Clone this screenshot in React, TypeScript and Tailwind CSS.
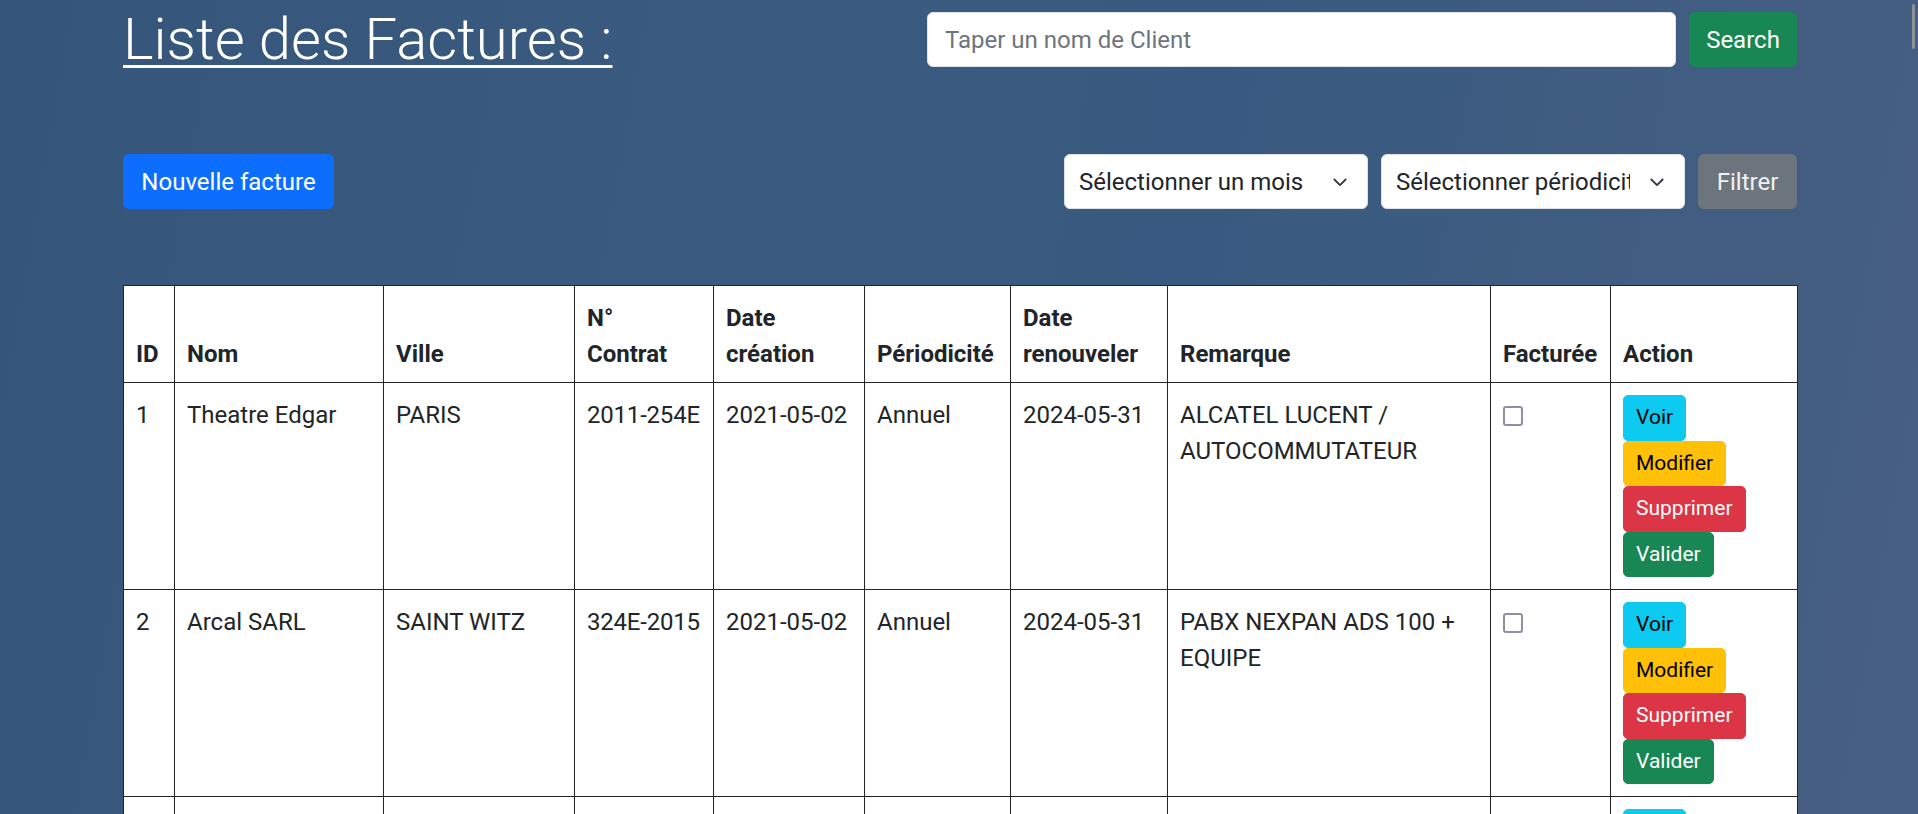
import React from "react";

type Facture = {
  id: number;
  nom: string;
  ville: string;
  contrat: string;
  creation: string;
  periodicite: string;
  renouveler: string;
  remarque: string;
};

const factures: Facture[] = [
  {
    id: 1,
    nom: "Theatre Edgar",
    ville: "PARIS",
    contrat: "2011-254E",
    creation: "2021-05-02",
    periodicite: "Annuel",
    renouveler: "2024-05-31",
    remarque: "ALCATEL LUCENT / AUTOCOMMUTATEUR",
  },
  {
    id: 2,
    nom: "Arcal SARL",
    ville: "SAINT WITZ",
    contrat: "324E-2015",
    creation: "2021-05-02",
    periodicite: "Annuel",
    renouveler: "2024-05-31",
    remarque: "PABX NEXPAN ADS 100 + EQUIPE",
  },
  {
    id: 3,
    nom: "Cabinet Morel",
    ville: "LYON",
    contrat: "118-2019",
    creation: "2021-06-14",
    periodicite: "Mensuel",
    renouveler: "2024-06-30",
    remarque: "STANDARD IP",
  },
];

const Chevron = () => (
  <svg
    viewBox="0 0 16 16"
    className="absolute right-[17px] top-1/2 -translate-y-1/2 w-[20px] h-[20px]"
    fill="none"
    stroke="#343a40"
    strokeWidth="1.5"
    strokeLinecap="round"
    strokeLinejoin="round"
  >
    <path d="m3.5 6 4.5 4.5 4.5-4.5" />
  </svg>
);

const Select = ({ label, width }: { label: string; width: string }) => (
  <div
    className={`relative flex items-center h-[55px] ${width} bg-white border border-[#dee2e6] rounded-[6px] pl-[14px] pr-[54px]`}
  >
    <span className="overflow-hidden whitespace-nowrap text-[24px] text-[#212529]">{label}</span>
    <Chevron />
  </div>
);

const th = "border border-[#212529] px-[12px] pt-[14px] pb-[10px] align-bottom text-left font-bold";
const td = "border border-[#212529] px-[12px] pt-[14px] pb-[10px] align-top";
const tdNoWrap = `${td} whitespace-nowrap`;
const tdAction = "border border-[#212529] px-[12px] py-[12px] align-top";

const App = () => {
  return (
    <div className="relative h-[814px] overflow-hidden bg-[linear-gradient(100deg,#35557a_0%,#3b5a7f_35%,#395a80_60%,#475f82_100%)] font-['Roboto','Liberation_Sans',sans-serif] text-[#212529]">
      {/* scrollbar */}
      <div className="absolute top-[4px] right-[3px] w-[3px] h-[45px] rounded-full bg-[#8c9097]" />

      <div className="pl-[123px] pr-[121px]">
        {/* header */}
        <div className="flex justify-between items-start">
          <h1 className="mt-[3px] text-[58px] leading-[72px] font-light text-white underline decoration-[3px] underline-offset-[6px]">
            Liste des Factures :
          </h1>
          <div className="flex gap-[13px] mt-[12px]">
            <input
              type="text"
              placeholder="Taper un nom de Client"
              className="w-[749px] h-[55px] bg-white border border-[#dee2e6] rounded-[6px] pl-[17px] text-[24px] placeholder:text-[#6c757d] outline-none"
            />
            <button className="w-[108px] h-[55px] rounded-[6px] bg-[#198754] text-white text-[24px]">
              Search
            </button>
          </div>
        </div>

        {/* actions */}
        <div className="flex justify-between items-center mt-[79px]">
          <button className="w-[211px] h-[55px] rounded-[6px] bg-[#0d6efd] text-white text-[24px]">
            Nouvelle facture
          </button>
          <div className="flex gap-[13px]">
            <Select label="Sélectionner un mois" width="w-[304px]" />
            <Select label="Sélectionner périodicité" width="w-[304px]" />
            <button className="w-[99px] h-[55px] rounded-[6px] bg-[#6c757d] text-[#f1f1f1] text-[24px]">
              Filtrer
            </button>
          </div>
        </div>

        {/* table */}
        <table className="mt-[76px] w-[1674px] table-fixed border-collapse bg-white text-[24px] leading-[36px]">
          <colgroup>
            <col className="w-[51px]" />
            <col className="w-[209px]" />
            <col className="w-[191px]" />
            <col className="w-[139px]" />
            <col className="w-[151px]" />
            <col className="w-[146px]" />
            <col className="w-[157px]" />
            <col className="w-[323px]" />
            <col className="w-[120px]" />
            <col className="w-[187px]" />
          </colgroup>
          <thead>
            <tr>
              <th className={th}>ID</th>
              <th className={th}>Nom</th>
              <th className={th}>Ville</th>
              <th className={th}>
                N°
                <br />
                Contrat
              </th>
              <th className={th}>
                Date
                <br />
                création
              </th>
              <th className={th}>Périodicité</th>
              <th className={th}>
                Date
                <br />
                renouveler
              </th>
              <th className={th}>Remarque</th>
              <th className={th}>Facturée</th>
              <th className={th}>Action</th>
            </tr>
          </thead>
          <tbody>
            {factures.map((f) => (
              <tr key={f.id}>
                <td className={td}>{f.id}</td>
                <td className={tdNoWrap}>{f.nom}</td>
                <td className={tdNoWrap}>{f.ville}</td>
                <td className={`${tdNoWrap} tracking-[-0.2px]`}>{f.contrat}</td>
                <td className={tdNoWrap}>{f.creation}</td>
                <td className={tdNoWrap}>{f.periodicite}</td>
                <td className={tdNoWrap}>{f.renouveler}</td>
                <td className={td}>{f.remarque}</td>
                <td className={tdAction}>
                  <span className="block w-[20px] h-[20px] mt-[11px] border-2 border-[#8f8f9d] rounded-[3px] bg-white" />
                </td>
                <td className={tdAction}>
                  <div className="flex flex-col items-start text-[21px] leading-[31.5px]">
                    <button className="px-[12px] py-[6px] border border-[#0dcaf0] bg-[#0dcaf0] text-black rounded-[5px]">
                      Voir
                    </button>
                    <button className="px-[12px] py-[6px] border border-[#ffc107] bg-[#ffc107] text-black rounded-[5px]">
                      Modifier
                    </button>
                    <button className="px-[12px] py-[6px] border border-[#dc3545] bg-[#dc3545] text-white rounded-[5px]">
                      Supprimer
                    </button>
                    <button className="px-[12px] py-[6px] border border-[#198754] bg-[#198754] text-white rounded-[5px]">
                      Valider
                    </button>
                  </div>
                </td>
              </tr>
            ))}
          </tbody>
        </table>
      </div>
    </div>
  );
};

export default App;
